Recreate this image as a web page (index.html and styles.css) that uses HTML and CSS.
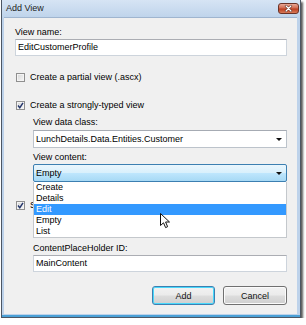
FILE: index.html
```html
<!DOCTYPE html>
<html lang="en">
<head>
  <meta charset="UTF-8" />
  <title>Add View</title>
  <link rel="stylesheet" href="styles.css">
</head>
<body>
  <div class="window">
    <div class="titlebar">
      <span class="title">Add View</span>
      <span class="close-btn">
        <svg viewBox="0 0 21 11" width="21" height="11">
          <path d="M7.5 2.5l6 6M13.5 2.5l-6 6" stroke="#5b2418" stroke-width="3" stroke-linecap="round"/>
          <path d="M7.5 2.5l6 6M13.5 2.5l-6 6" stroke="#fff" stroke-width="1.6" stroke-linecap="round"/>
        </svg>
      </span>
    </div>
    <div class="client">
      <div class="label">View name:</div>
      <div class="textbox">EditCustomerProfile</div>

      <div class="check-row first-check">
        <span class="check"></span>Create a partial view (.ascx)
      </div>
      <div class="check-row second-check">
        <span class="check">
          <svg viewBox="0 0 9 9" width="9" height="9"><path d="M2 4.5l1.8 2.2L7 1.8" stroke="#24366b" stroke-width="1.4" fill="none"/></svg>
        </span>Create a strongly-typed view
      </div>

      <div class="group">
        <div class="label data-class-label">View data class:</div>
        <div class="combo">
          <span>LunchDetails.Data.Entities.Customer</span>
          <span class="arrow"></span>
        </div>
        <div class="label content-label">View content:</div>
        <div class="combo-wrap">
          <div class="combo focused">
            <span>Empty</span>
            <span class="arrow"></span>
          </div>
          <ul class="droplist">
            <li>Create</li>
            <li>Details</li>
            <li class="selected">Edit</li>
            <li>Empty</li>
            <li>List</li>
          </ul>
          <svg class="cursor" viewBox="0 0 11 16" width="11" height="16">
            <path d="M0.5 0.5V12.5L3.5 9.8L5.6 14.6L7.6 13.7L5.6 9H9.5Z" fill="#fff" stroke="#111" stroke-width="1" stroke-linejoin="round"/>
          </svg>
        </div>
      </div>

      <div class="check-row master-check">
        <span class="check">
          <svg viewBox="0 0 9 9" width="9" height="9"><path d="M2 4.5l1.8 2.2L7 1.8" stroke="#24366b" stroke-width="1.4" fill="none"/></svg>
        </span><span class="clipped">Select master page</span>
      </div>

      <div class="group">
        <div class="master-row">
          <div class="textbox"></div>
          <span class="browse-btn"></span>
        </div>
        <div class="label holder-label">ContentPlaceHolder ID:</div>
        <div class="textbox">MainContent</div>
      </div>

      <div class="buttons">
        <span class="btn default">Add</span>
        <span class="btn">Cancel</span>
      </div>
    </div>
  </div>
</body>
</html>
```

FILE: styles.css
```css
html, body {
  margin: 0;
  padding: 0;
  background: #ffffff;
  font-family: "Liberation Sans", Arial, sans-serif;
  font-size: 9px;
  color: #000;
}
.window {
  width: 298px;
  margin-left: 1px;
  border: 1px solid #4c5663;
  border-top: none;
  background: #bdd2ea;
  box-shadow: 2px 2px 2px rgba(0, 0, 0, 0.65), inset 0 -2px 0 #4aa0d6;
}
.titlebar {
  height: 17px;
  display: flex;
  justify-content: space-between;
  align-items: flex-start;
  padding: 0 1px 0 4px;
  background: linear-gradient(#d6e4f4, #bfd4eb);
}
.title {
  line-height: 17px;
  color: #1c1c1c;
}
.close-btn {
  margin-top: 3px;
  width: 21px;
  height: 11px;
  border: 1px solid #6b3226;
  border-radius: 3px;
  box-sizing: border-box;
  background: linear-gradient(#eaa896, #d06a50 45%, #bb3d20 55%, #d87a58);
  display: flex;
  align-items: center;
  justify-content: center;
}
.close-btn svg {
  width: 19px;
  height: 9px;
}
.client {
  margin: 0 3px 3px 2px;
  background: #f0f0f0;
  border-top: 1px solid #9fb5cf;
  padding: 8px 10px 9px 11px;
  display: flex;
  flex-direction: column;
}
.label {
  height: 12px;
  line-height: 12px;
}
.textbox {
  margin-top: 1px;
  height: 17px;
  box-sizing: border-box;
  border: 1px solid #cdd4dc;
  border-top-color: #abadb3;
  background: #fff;
  padding: 0 2px;
  line-height: 15px;
  white-space: nowrap;
}
.check-row {
  height: 12px;
  display: flex;
  align-items: center;
  line-height: 12px;
}
.first-check { margin-top: 15px; }
.second-check { margin-top: 16px; }
.master-check { margin-top: 17px; }
.check {
  width: 9px;
  height: 9px;
  margin: 0 5px 0 1px;
  box-sizing: border-box;
  border: 1px solid #8f8f8f;
  background: linear-gradient(135deg, #d6d6d6, #f7f7f7);
  box-shadow: inset 0 0 0 1px #f4f4f4;
  display: flex;
  align-items: center;
  justify-content: center;
}
.check svg {
  width: 9px;
  height: 9px;
  flex: none;
}
.clipped {
  width: 4px;
  overflow: hidden;
  white-space: nowrap;
}
.group {
  padding-left: 18px;
  display: flex;
  flex-direction: column;
}
.data-class-label { margin-top: 5px; }
.content-label { margin-top: 3px; }
.holder-label { margin-top: 8px; }
.combo {
  margin-top: 2px;
  height: 18px;
  box-sizing: border-box;
  border: 1px solid #bcc3cb;
  border-top-color: #a6abb3;
  background: #fff;
  padding: 0 4px 0 2px;
  display: flex;
  align-items: center;
  justify-content: space-between;
  white-space: nowrap;
}
.combo.focused {
  margin-top: 0;
  border: 1px solid #3c7fb1;
  border-radius: 2px;
  background: linear-gradient(#eaf6fd, #d9f0fc 48%, #bee6fd 52%, #a7d9f5);
}
.arrow {
  width: 0;
  height: 0;
  border-left: 3px solid transparent;
  border-right: 3px solid transparent;
  border-top: 3px solid #111;
}
.combo-wrap {
  position: relative;
  margin-top: 1px;
}
.droplist {
  position: absolute;
  top: 100%;
  left: 0;
  right: 0;
  margin: 0;
  padding: 0;
  list-style: none;
  background: #fff;
  border: 1px solid #c4c8cc;
  border-top: none;
  z-index: 5;
}
.droplist li {
  height: 11px;
  line-height: 11px;
  padding-left: 2px;
}
.droplist li.selected {
  background: #3399ff;
  color: #fff;
}
.cursor {
  position: absolute;
  left: 127px;
  top: 49px;
  z-index: 6;
}
.master-row {
  margin-top: 6px;
  display: flex;
  gap: 4px;
}
.master-row .textbox {
  flex: 1;
  margin-top: 0;
}
.browse-btn {
  width: 22px;
  height: 17px;
  border: 1px solid #707070;
  box-sizing: border-box;
}
.buttons {
  margin-top: 14px;
  display: flex;
  justify-content: flex-end;
  gap: 8px;
}
.btn {
  width: 64px;
  height: 19px;
  box-sizing: border-box;
  border: 1px solid #707070;
  border-radius: 3px;
  background: linear-gradient(#f2f2f2, #ebebeb 48%, #dddddd 52%, #cfcfcf);
  box-shadow: inset 0 0 0 1px #fbfbfb;
  display: flex;
  align-items: center;
  justify-content: center;
  color: #111;
}
.btn.default {
  width: 63px;
  border-color: #3c7fb1;
  box-shadow: inset 0 0 0 1px #48d8fb;
}
```
